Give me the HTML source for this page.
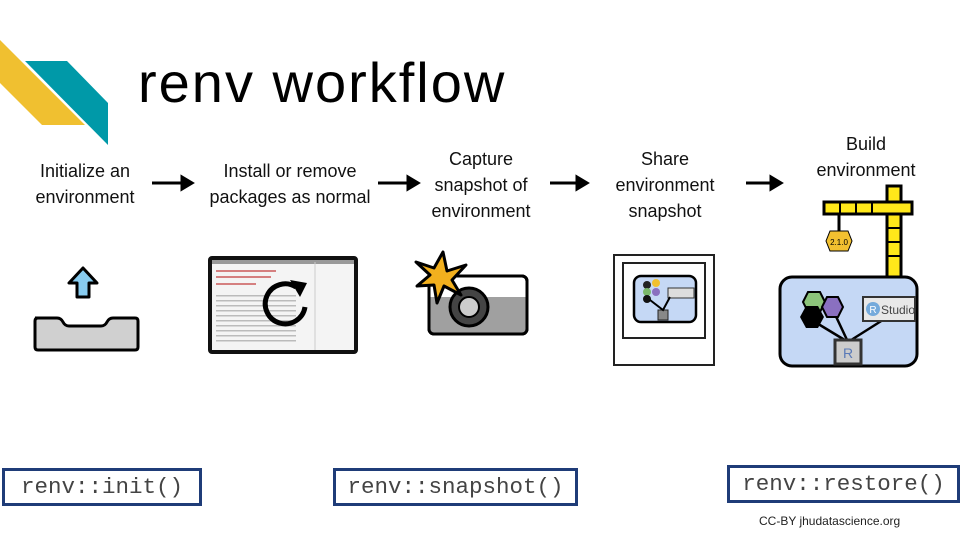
<!DOCTYPE html>
<html><head><style>
body{margin:0;width:960px;height:540px;background:#fff;overflow:hidden;position:relative;font-family:"Liberation Sans",sans-serif}
.t{position:absolute;text-align:center;font-size:18px;line-height:26px;color:#111;white-space:nowrap;transform:translateX(-50%)}
.box{position:absolute;border:3px solid #1f3c78;font-family:"Liberation Mono",monospace;font-size:22.5px;color:#444;display:flex;align-items:center;justify-content:center;box-sizing:border-box}
</style></head><body>
<svg width="960" height="540" style="position:absolute;left:0;top:0">
<polygon points="0,40 85,125 42,125 0,83" fill="#f0c030"/>
<polygon points="25,61 67,61 108,103 108,145" fill="#0099a8"/>
<g fill="#000" stroke="#000" stroke-width="3">
<line x1="152" y1="183" x2="182" y2="183"/><polygon points="182,177 192,183 182,189"/>
<line x1="378" y1="183" x2="408" y2="183"/><polygon points="408,177 418,183 408,189"/>
<line x1="550" y1="183" x2="577" y2="183"/><polygon points="577,177 587,183 577,189"/>
<line x1="746" y1="183" x2="771" y2="183"/><polygon points="771,177 781,183 771,189"/>
</g>
<path d="M35,318 h22 q4,0 6,4 q2,4 6,4 h32 q4,0 6,-4 q2,-4 6,-4 h22 q3,0 3,3 v26 q0,3 -3,3 h-97 q-3,0 -3,-3 v-26 q0,-3 3,-3z" fill="#d0d0d0" stroke="#000" stroke-width="3"/>
<path d="M83,268 l-14,15 h8 v14 h12 v-14 h8z" fill="#88ccf0" stroke="#000" stroke-width="3" stroke-linejoin="round"/>
<rect x="210" y="258" width="146" height="94" fill="#f4f4f4" stroke="#111" stroke-width="4" rx="2"/>
<rect x="212" y="260" width="142" height="4" fill="#999"/>
<g fill="#c85050" opacity=".7"><rect x="216" y="270" width="60" height="2"/><rect x="216" y="276" width="55" height="2"/><rect x="216" y="283" width="40" height="2"/></g>
<g fill="#bbb"><rect x="216" y="295" width="80" height="1.5"/><rect x="216" y="300" width="80" height="1.5"/><rect x="216" y="305" width="80" height="1.5"/><rect x="216" y="310" width="80" height="1.5"/><rect x="216" y="315" width="80" height="1.5"/><rect x="216" y="320" width="80" height="1.5"/><rect x="216" y="325" width="80" height="1.5"/><rect x="216" y="330" width="80" height="1.5"/><rect x="216" y="335" width="80" height="1.5"/><rect x="216" y="340" width="80" height="1.5"/></g>
<line x1="315" y1="262" x2="315" y2="350" stroke="#ccc"/>
<path d="M305,307 A20,20 0 1 1 296,287" fill="none" stroke="#000" stroke-width="5"/>
<polygon points="290,280 307,283 300,297" fill="#000"/>
<rect x="429" y="276" width="98" height="58" rx="5" fill="#fff" stroke="#000" stroke-width="3"/>
<path d="M430,297 h96 v32 q0,4 -4,4 h-88 q-4,0 -4,-4z" fill="#a0a0a0"/>
<rect x="429" y="276" width="98" height="58" rx="5" fill="none" stroke="#000" stroke-width="3"/>
<circle cx="469" cy="307" r="19" fill="#444" stroke="#000" stroke-width="3"/>
<circle cx="469" cy="307" r="10" fill="#ccc" stroke="#000" stroke-width="2"/>
<polygon points="443,252 447,271 466,265 452,280 461,295 444,286 437,303 434,285 417,286 430,275 416,262 434,268" fill="#f2b01e" stroke="#000" stroke-width="3" stroke-linejoin="round"/>
<rect x="614" y="255" width="100" height="110" fill="#fff" stroke="#222" stroke-width="2"/>
<rect x="623" y="263" width="82" height="75" fill="#fff" stroke="#222" stroke-width="2"/>
<rect x="634" y="276" width="62" height="46" rx="7" fill="#c5d8f5" stroke="#000" stroke-width="2.5"/>
<circle cx="647" cy="285" r="4" fill="#222"/><circle cx="656" cy="283" r="4" fill="#f0c030"/><circle cx="647" cy="292" r="4" fill="#7ab86a"/><circle cx="656" cy="292" r="4" fill="#8a70c0"/><circle cx="647" cy="299" r="4" fill="#111"/>
<rect x="668" y="288" width="26" height="10" fill="#ddd" stroke="#333"/>
<rect x="658" y="310" width="10" height="10" fill="#888" stroke="#222"/>
<path d="M650,300 L663,310 L670,297" stroke="#000" stroke-width="2" fill="none"/>
<rect x="887" y="186" width="14" height="92" fill="#ffe81a" stroke="#000" stroke-width="3"/>
<rect x="824" y="202" width="88" height="12" fill="#ffe81a" stroke="#000" stroke-width="3"/>
<g stroke="#000" stroke-width="2"><line x1="840" y1="202" x2="840" y2="214"/><line x1="856" y1="202" x2="856" y2="214"/><line x1="872" y1="202" x2="872" y2="214"/><line x1="887" y1="228" x2="901" y2="228"/><line x1="887" y1="242" x2="901" y2="242"/><line x1="887" y1="256" x2="901" y2="256"/></g>
<line x1="839" y1="214" x2="839" y2="231" stroke="#000" stroke-width="3"/>
<polygon points="830,231 848,231 852,241 848,251 830,251 826,241" fill="#f2c030" stroke="#000"/>
<text x="839" y="245" font-size="8" text-anchor="middle" font-family="Liberation Sans">2.1.0</text>
<rect x="780" y="277" width="137" height="89" rx="12" fill="#c5d8f5" stroke="#000" stroke-width="3"/>
<g stroke="#000" stroke-width="2.5"><line x1="815" y1="322" x2="848" y2="342"/><line x1="832" y1="308" x2="848" y2="342"/><line x1="886" y1="318" x2="848" y2="342"/></g>
<polygon points="803,302 808,292 820,292 825,302 820,312 808,312" fill="#8cc47a" stroke="#000" stroke-width="2"/>
<polygon points="822,307 827,297 838,297 843,307 838,317 827,317" fill="#8a70c0" stroke="#000" stroke-width="2"/>
<polygon points="800,317 806,306 818,306 824,317 818,328 806,328" fill="#000"/>
<rect x="863" y="297" width="52" height="24" fill="#e8e8e8" stroke="#333" stroke-width="2"/>
<circle cx="873" cy="309" r="7" fill="#75aadb"/><text x="873" y="313" font-size="10" fill="#fff" text-anchor="middle">R</text>
<text x="881" y="314" font-size="12" fill="#444">Studio</text>
<rect x="835" y="340" width="26" height="24" fill="#ccc" stroke="#333" stroke-width="3"/>
<text x="848" y="358" font-size="14" fill="#5a7ab8" text-anchor="middle">R</text>
</svg>
<div style="position:absolute;left:138px;top:50px;font-size:56px;color:#000;letter-spacing:2px">renv workflow</div>
<div class="t" style="left:85px;top:158px">Initialize an<br>environment</div>
<div class="t" style="left:290px;top:158px">Install or remove<br>packages as normal</div>
<div class="t" style="left:481px;top:146px">Capture<br>snapshot of<br>environment</div>
<div class="t" style="left:665px;top:146px">Share<br>environment<br>snapshot</div>
<div class="t" style="left:866px;top:131px">Build<br>environment</div>
<div class="box" style="left:2px;top:468px;width:200px;height:38px">renv::init()</div>
<div class="box" style="left:333px;top:468px;width:245px;height:38px">renv::snapshot()</div>
<div class="box" style="left:727px;top:465px;width:233px;height:38px">renv::restore()</div>
<div style="position:absolute;left:759px;top:514px;font-size:12px;color:#222">CC-BY jhudatascience.org</div>
</body></html>
